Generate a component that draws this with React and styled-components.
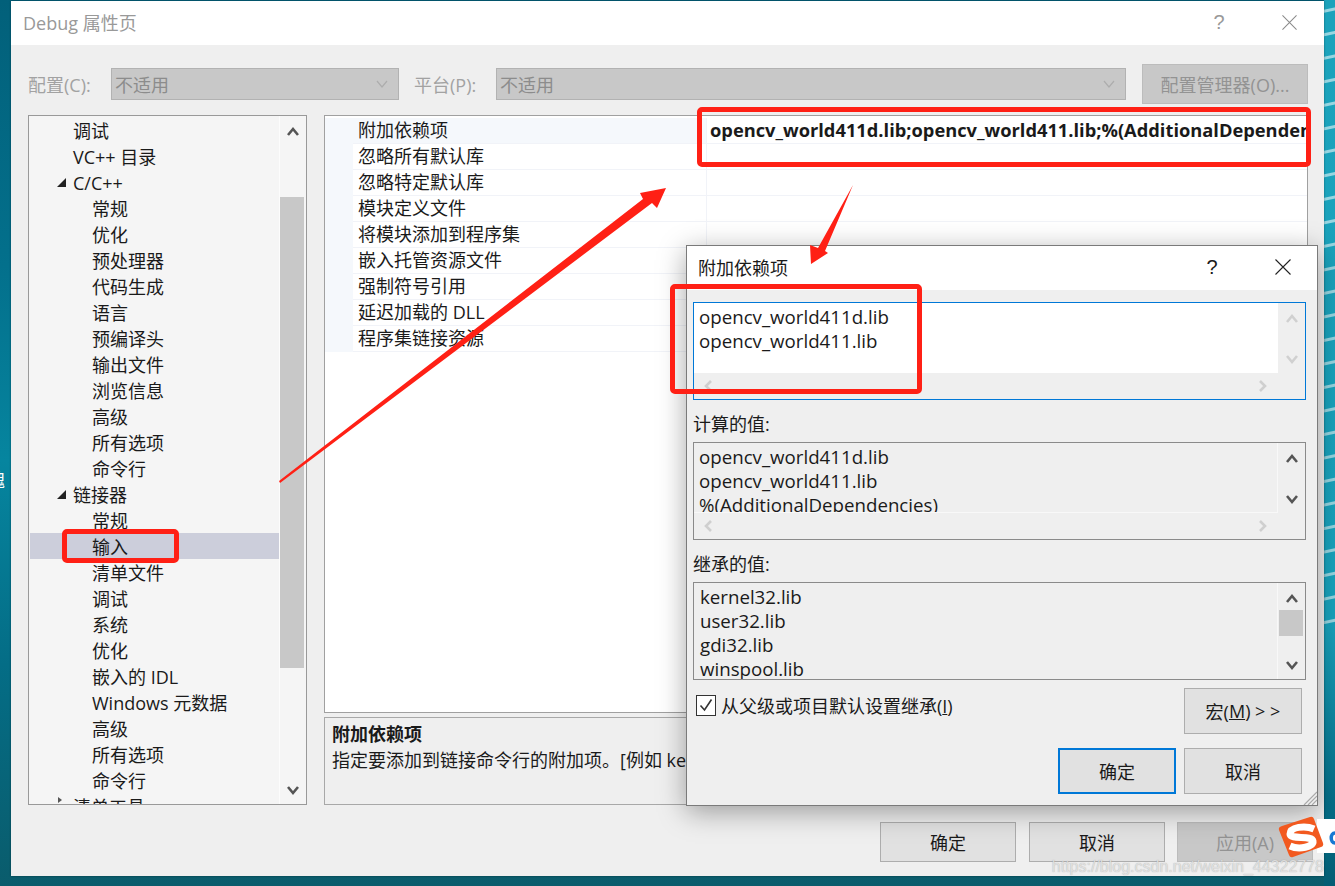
import styled, { createGlobalStyle } from "styled-components"

const GlobalStyle = createGlobalStyle`
    html, body {
        margin: 0;
        padding: 0;
        overflow: hidden;
    }
    * {
        box-sizing: border-box;
    }
`

const Desktop = styled.div`
    position: relative;
    width: 1335px;
    height: 886px;
    padding: 1px 11px 11px 11px;
    overflow: hidden;
    font-family: "Open Sans", "Noto Sans CJK SC", sans-serif;
    font-size: 18px;
    color: #1a1a1a;
    background:
        repeating-linear-gradient(168deg, rgba(255,255,255,0) 0 9px, rgba(255,255,255,.55) 10px 12px, rgba(255,255,255,0) 13px 23px) right top / 11px 640px no-repeat,
        linear-gradient(180deg, #1ba2bb 0%, #18a3bd 70%, #04708a 90%, #035d73 100%) right top / 11px 100% no-repeat,
        linear-gradient(180deg, #02607a 0%, #03708c 30%, #06859f 52%, #046d86 75%, #0a5c6c 100%);
`

const DesktopLabel = styled.div`
    position: absolute;
    left: -13px;
    top: 468px;
    color: #fff;
    line-height: 24px;
`

const Win = styled.div`
    position: relative;
    display: flex;
    flex-direction: column;
    height: 875px;
    background: #efefef;
    box-shadow: 0 0 2px rgba(0,0,0,.4);
`

const TitleBar = styled.div`
    display: flex;
    align-items: center;
    flex: none;
    height: ${p => p.$h}px;
    padding: 0 ${p => p.$right}px 2px ${p => p.$left}px;
    background: #fff;
    color: ${p => p.$muted ? "#999" : "#1a1a1a"};
`

const TitleText = styled.div`
    flex: 1;
`

const HelpMark = styled.div`
    width: 30px;
    text-align: center;
    font-family: "Liberation Sans", sans-serif;
    font-size: 20px;
    margin-right: ${p => p.$gap}px;
`

const Body = styled.div`
    flex: 1;
    display: flex;
    flex-direction: column;
    padding: 19px 16px 13px 17px;
`

const ConfigRow = styled.div`
    display: flex;
    align-items: center;
    height: 40px;
    flex: none;
`

const ConfigLabel = styled.div`
    width: ${p => p.$w}px;
    flex: none;
    color: #a2a2a2;
    margin-left: ${p => p.$ml || 0}px;
`

const FakeSelect = styled.div`
    display: flex;
    align-items: center;
    justify-content: space-between;
    height: 32px;
    padding: 0 9px 0 3px;
    flex: ${p => p.$w ? "none" : "1"};
    width: ${p => p.$w ? p.$w + "px" : "auto"};
    background: #c8c8c8;
    border: 1px solid #b2b2b2;
    color: #8c8c8c;
`

const GreyButton = styled.div`
    display: flex;
    align-items: center;
    justify-content: center;
    flex: none;
    width: ${p => p.$w}px;
    height: ${p => p.$h}px;
    margin-left: ${p => p.$ml || 0}px;
    background: ${p => p.$off ? "#c8c8c8" : "#e1e1e1"};
    border: ${p => p.$primary ? "2px solid #0078d7" : `1px solid ${p.$off ? "#bcbcbc" : "#adadad"}`};
    color: ${p => p.$off ? "#939393" : "#1a1a1a"};
`

const Panels = styled.div`
    display: flex;
    gap: 17px;
    height: 690px;
    margin-top: 11px;
    flex: none;
`

const TreePanel = styled.div`
    display: flex;
    width: 279px;
    flex: none;
    background: #f5f5f5;
    border: 1px solid #999;
`

const TreeList = styled.div`
    flex: 1;
    min-width: 0;
    padding: 1px 0 0 1px;
    overflow: hidden;
`

const TreeRow = styled.div`
    position: relative;
    height: 26px;
    line-height: 28px;
    white-space: nowrap;
    padding-left: ${p => p.$level === 1 ? 43 : 62}px;
    background: ${p => p.$selected ? "#cccedb" : "transparent"};
`

const Expander = styled.span`
    position: absolute;
    left: ${p => p.$open ? 27 : 28}px;
    top: ${p => p.$open ? 9 : 4}px;
    width: 0;
    height: 0;
    ${p => p.$open
        ? "border-left: 9px solid transparent; border-bottom: 9px solid #222;"
        : "border-left: 4px solid #555; border-top: 3px solid transparent; border-bottom: 3px solid transparent;"}
`

const TreeScroll = styled.div`
    display: flex;
    flex-direction: column;
    width: 27px;
    flex: none;
    border-left: 1px solid #fcfcfc;
    justify-content: space-between;
`

const Thumb = styled.div`
    height: ${p => p.$h}px;
    margin: 0 2px 0 ${p => p.$ml || 0}px;
    background: #c8c8c8;
    flex: none;
`

const ScrollCell = styled.div`
    display: flex;
    align-items: center;
    justify-content: center;
    height: ${p => p.$h}px;
    padding: ${p => p.$pt || 0}px 0 ${p => p.$pb || 0}px;
    flex: none;
`

const RightColumn = styled.div`
    display: flex;
    flex-direction: column;
    gap: 4px;
    flex: 1;
    min-width: 0;
`

const PropGrid = styled.div`
    height: 598px;
    flex: none;
    padding-top: 2px;
    background: #fff;
    border: 1px solid #a0a0a0;
    overflow: hidden;
`

const PropRow = styled.div`
    display: grid;
    grid-template-columns: 28px 353px 1fr;
    height: 26px;
    line-height: 25px;
`

const Gutter = styled.div`
    background: #f5f8fc;
`

const PropName = styled.div`
    padding-left: 5px;
    background: ${p => p.$selected ? "#f5f8fc" : "#fff"};
    border-bottom: 1px solid #f1f3f8;
`

const PropValue = styled.div`
    padding-left: 3px;
    font-size: 18.3px;
    font-weight: 700;
    line-height: 23px;
    white-space: nowrap;
    overflow: hidden;
    border-left: 1px solid #f1f3f8;
    border-bottom: 1px solid #f1f3f8;
`

const DescPanel = styled.div`
    height: 88px;
    flex: none;
    padding: 3px 7px;
    line-height: 26px;
    border: 1px solid #a8a8a8;
    white-space: nowrap;
    overflow: hidden;
`

const DescTitle = styled.div`
    font-weight: 700;
`

const Footer = styled.div`
    display: flex;
    justify-content: flex-end;
    margin-top: 17px;
    margin-right: -5px;
`

const Dialog = styled.div`
    position: absolute;
    left: 686px;
    top: 245px;
    width: 632px;
    height: 561px;
    display: flex;
    flex-direction: column;
    background: #efefef;
    border: 1px solid #7a7a7a;
    box-shadow: 0 6px 26px rgba(0,0,0,.35);
`

const DialogBody = styled.div`
    flex: 1;
    padding: 12px 11px 0 6px;
`

const ValueBox = styled.div`
    display: grid;
    grid-template-columns: 1fr 27px;
    grid-template-rows: ${p => p.$noBar ? "96px" : "70px 26px"};
    height: 98px;
    background: #efefef;
    border: 1px solid ${p => p.$active ? "#0078d7" : "#8a8a8a"};
`

const ValueLines = styled.div`
    padding: 2px 0 0 ${p => p.$pad}px;
    font-size: 18.7px;
    line-height: 24px;
    overflow: hidden;
    white-space: nowrap;
    background: ${p => p.$active ? "#fff" : "#efefef"};
    border-right: 1px solid ${p => p.$active ? "#fff" : "#f8f8f8"};
    border-bottom: ${p => p.$noBar ? "0" : `1px solid ${p.$active ? "#fff" : "#f8f8f8"}`};
`

const VScroll = styled.div`
    display: flex;
    flex-direction: column;
    justify-content: space-between;
`

const HScroll = styled.div`
    display: flex;
    align-items: center;
    justify-content: space-between;
    padding: 0 9px 0 8px;
`

const FieldLabel = styled.div`
    height: 42px;
    line-height: 48px;
`

const OptionsRow = styled.div`
    display: flex;
    justify-content: space-between;
    padding-right: 4px;
    margin-top: 8px;
`

const CheckLabel = styled.div`
    display: flex;
    align-items: center;
    gap: 5px;
    height: 22px;
    margin: 6px 0 0 3px;
`

const CheckBox = styled.div`
    display: flex;
    align-items: center;
    justify-content: center;
    width: 20px;
    height: 21px;
    background: #fff;
    border: 1px solid #333;
`

const Under = styled.span`
    text-decoration: underline;
`

const DialogActions = styled.div`
    display: flex;
    justify-content: flex-end;
    gap: 8px;
    padding-right: 4px;
    margin-top: 14px;
`

const Grip = styled.svg`
    position: absolute;
    right: 0;
    bottom: 0;
`

const RedFrame = styled.div`
    position: absolute;
    left: ${p => p.$x}px;
    top: ${p => p.$y}px;
    width: ${p => p.$w}px;
    height: ${p => p.$h}px;
    border: 5px solid #ff2015;
    border-radius: 5px;
`

const Overlay = styled.svg`
    position: absolute;
    left: 0;
    top: 0;
`

const Watermark = styled.div`
    position: absolute;
    right: 11px;
    top: 855px;
    font-family: "Liberation Sans", sans-serif;
    font-size: 16px;
    line-height: 24px;
    color: rgba(232,232,232,.85);
    text-shadow: 0 0 1px rgba(110,110,110,.55);
    white-space: nowrap;
`

const Chevron = ({ dir = "up", color = "#555", size = 14, weight = 2.6 }) => {
    const points = {
        up: "2,10 7,4 12,10",
        down: "2,4 7,10 12,4",
        left: "9,2 4,7 9,12",
        right: "5,2 10,7 5,12",
    }
    return (
        <svg width={size} height={size} viewBox="0 0 14 14">
            <polyline points={points[dir]} fill="none" stroke={color} strokeWidth={weight} />
        </svg>
    )
}

const CloseMark = ({ size, color }) => (
    <svg width={size} height={size} viewBox="0 0 16 16">
        <path d="M.5.5 15.5 15.5M15.5.5.5 15.5" stroke={color} strokeWidth="1.1" fill="none" />
    </svg>
)

const treeItems = [
    { t: "调试", l: 1 }, { t: "VC++ 目录", l: 1 }, { t: "C/C++", l: 1, open: true },
    { t: "常规" }, { t: "优化" }, { t: "预处理器" }, { t: "代码生成" }, { t: "语言" },
    { t: "预编译头" }, { t: "输出文件" }, { t: "浏览信息" }, { t: "高级" }, { t: "所有选项" }, { t: "命令行" },
    { t: "链接器", l: 1, open: true },
    { t: "常规" }, { t: "输入", selected: true }, { t: "清单文件" }, { t: "调试" }, { t: "系统" }, { t: "优化" },
    { t: "嵌入的 IDL" }, { t: "Windows 元数据" }, { t: "高级" }, { t: "所有选项" }, { t: "命令行" },
    { t: "清单工具", l: 1, closed: true },
]

const propNames = [
    "附加依赖项", "忽略所有默认库", "忽略特定默认库", "模块定义文件", "将模块添加到程序集",
    "嵌入托管资源文件", "强制符号引用", "延迟加载的 DLL", "程序集链接资源",
]

const Box = ({ lines, active, noBar, pad = 5, muted, thumb }) => {
    const arrow = muted ? "#d0d0d0" : "#555"
    return (
        <ValueBox $active={active} $noBar={noBar}>
            <ValueLines $active={active} $noBar={noBar} $pad={pad}>
                {lines.map(line => <div key={line}>{line}</div>)}
            </ValueLines>
            <VScroll>
                <div>
                    <ScrollCell $h={27} $pt={5}><Chevron dir="up" color={arrow} /></ScrollCell>
                    {thumb && <Thumb $h={26} $ml={1} />}
                </div>
                <ScrollCell $h={28}><Chevron dir="down" color={arrow} /></ScrollCell>
            </VScroll>
            {!noBar && (
                <HScroll>
                    <Chevron dir="left" color="#cfcfcf" />
                    <Chevron dir="right" color="#cfcfcf" />
                </HScroll>
            )}
        </ValueBox>
    )
}

const App = () => {
    return <Desktop>
        <GlobalStyle />
        <DesktopLabel>魂</DesktopLabel>
        <Win>
            <TitleBar $h={44} $left={12} $right={27} $muted>
                <TitleText>Debug 属性页</TitleText>
                <HelpMark $gap={48}>?</HelpMark>
                <CloseMark size={15} color="#8a8a8a" />
            </TitleBar>
            <Body>
                <ConfigRow>
                    <ConfigLabel $w={83}>配置(C):</ConfigLabel>
                    <FakeSelect $w={288}>不适用<Chevron dir="down" color="#adadad" size={14} weight={1.2} /></FakeSelect>
                    <ConfigLabel $w={82} $ml={15}>平台(P):</ConfigLabel>
                    <FakeSelect>不适用<Chevron dir="down" color="#adadad" size={14} weight={1.2} /></FakeSelect>
                    <GreyButton $w={166} $h={40} $ml={16} $off>配置管理器(O)...</GreyButton>
                </ConfigRow>
                <Panels>
                    <TreePanel>
                        <TreeList>
                            {treeItems.map((item, i) => (
                                <TreeRow key={i} $level={item.l} $selected={item.selected}>
                                    {item.open && <Expander $open />}
                                    {item.closed && <Expander />}
                                    {item.t}
                                </TreeRow>
                            ))}
                        </TreeList>
                        <TreeScroll>
                            <div>
                                <ScrollCell $h={81} $pb={49}><Chevron dir="up" /></ScrollCell>
                                <Thumb $h={471} />
                            </div>
                            <ScrollCell $h={28}><Chevron dir="down" /></ScrollCell>
                        </TreeScroll>
                    </TreePanel>
                    <RightColumn>
                        <PropGrid>
                            {propNames.map((name, i) => (
                                <PropRow key={name}>
                                    <Gutter />
                                    <PropName $selected={i === 0}>{name}</PropName>
                                    <PropValue>{i === 0 && "opencv_world411d.lib;opencv_world411.lib;%(AdditionalDependencies)"}</PropValue>
                                </PropRow>
                            ))}
                        </PropGrid>
                        <DescPanel>
                            <DescTitle>附加依赖项</DescTitle>
                            指定要添加到链接命令行的附加项。[例如 kernel32.lib]
                        </DescPanel>
                    </RightColumn>
                </Panels>
                <Footer>
                    <GreyButton $w={136} $h={40}>确定</GreyButton>
                    <GreyButton $w={136} $h={40} $ml={13}>取消</GreyButton>
                    <GreyButton $w={136} $h={40} $ml={12} $off>应用(A)</GreyButton>
                </Footer>
            </Body>
        </Win>

        <Dialog>
            <TitleBar $h={44} $left={11} $right={26}>
                <TitleText>附加依赖项</TitleText>
                <HelpMark $gap={48}>?</HelpMark>
                <CloseMark size={16} color="#222" />
            </TitleBar>
            <DialogBody>
                <Box active muted lines={["opencv_world411d.lib", "opencv_world411.lib"]} />
                <FieldLabel>计算的值:</FieldLabel>
                <Box lines={["opencv_world411d.lib", "opencv_world411.lib", "%(AdditionalDependencies)"]} />
                <FieldLabel>继承的值:</FieldLabel>
                <Box noBar thumb pad={6} lines={["kernel32.lib", "user32.lib", "gdi32.lib", "winspool.lib", "comdlg32.lib"]} />
                <OptionsRow>
                    <CheckLabel>
                        <CheckBox>
                            <svg width="14" height="14" viewBox="0 0 14 14">
                                <path d="M1.5 7.5 5.5 12 12.5 1.5" fill="none" stroke="#333" strokeWidth="1.6" />
                            </svg>
                        </CheckBox>
                        <span>从父级或项目默认设置继承(<Under>I</Under>)</span>
                    </CheckLabel>
                    <GreyButton $w={118} $h={46}>宏(<Under>M</Under>) &gt; &gt;</GreyButton>
                </OptionsRow>
                <DialogActions>
                    <GreyButton $w={118} $h={46} $primary>确定</GreyButton>
                    <GreyButton $w={118} $h={46}>取消</GreyButton>
                </DialogActions>
            </DialogBody>
            <Grip width="14" height="14" viewBox="0 0 14 14">
                <path d="M14 1 1 14M14 5 5 14M14 9 9 14" stroke="#a8a8a8" strokeWidth="1.2" fill="none" />
            </Grip>
        </Dialog>

        {/* anotaciones rojas encima de la captura */}
        <RedFrame $x={697} $y={107} $w={614} $h={60} />
        <RedFrame $x={670} $y={284} $w={252} $h={110} />
        <RedFrame $x={62} $y={529} $w={117} $h={34} />
        <Overlay width="1335" height="886" viewBox="0 0 1335 886">
            <polygon points="279,481 643,199 640,193 666,188 657,208 652,203 280,483" fill="#ff2015" />
            <polygon points="853,185 825,251 828,253 811,264 810,245 818,248" fill="#ff2015" />
        </Overlay>

        <Watermark>https://blog.csdn.net/weixin_44322778</Watermark>

        <Overlay width="1335" height="886" viewBox="0 0 1335 886">
            <rect x="1317" y="819" width="18" height="34" fill="#fff" />
            <path d="M1335 833C1330 833 1330 843 1335 843" fill="none" stroke="#1678d2" strokeWidth="3.5" />
            <path d="M1282 826 1310 817Q1313 816 1314 819L1323 843Q1324 846 1321 847L1293 857Q1290 858 1289 855L1279 830Q1278 827 1282 826Z" fill="#f2591f" />
            <path d="M1314 829C1305 825 1290 827 1290 834C1290 840 1312 835 1313 841C1314 847 1299 850 1290 846" fill="none" stroke="#fff" strokeWidth="7" />
        </Overlay>
    </Desktop>
}

export default App
